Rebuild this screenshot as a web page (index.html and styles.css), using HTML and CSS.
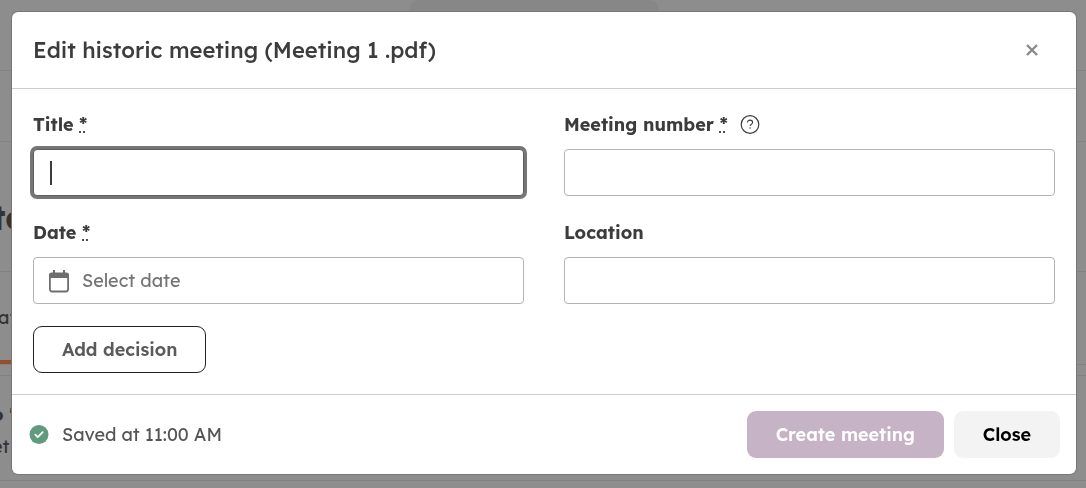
FILE: index.html
```html
<!DOCTYPE html>
<html lang="en">
<head>
  <meta charset="UTF-8" />
  <meta name="viewport" content="width=device-width, initial-scale=1.0" />
  <title>Edit historic meeting</title>
  <link rel="stylesheet" href="styles.css">
</head>
<body>
  <!-- Page behind the dialog -->
  <div class="page" aria-hidden="true">
    <div class="page-search"><span class="search-box"></span></div>
    <div class="page-bar"></div>
    <div class="page-title">to</div>
    <div class="page-tabs"><span class="tab">af</span></div>
    <div class="page-gap"></div>
    <div class="page-card">
      <strong>o '</strong>
      <span>et</span>
    </div>
  </div>

  <div class="overlay">
    <form class="modal" role="dialog" aria-labelledby="modal-title">
      <header class="modal-header">
        <h1 id="modal-title">Edit historic meeting (Meeting 1 .pdf)</h1>
        <button type="button" class="close-icon" aria-label="Close">
          <svg width="12" height="12" viewBox="0 0 12 12"><path d="M1 1l10 10M11 1L1 11" stroke="#8a8a8a" stroke-width="2.4" fill="none" /></svg>
        </button>
      </header>

      <div class="modal-body">
        <div class="form-grid">
          <div class="field">
            <div class="label-row">
              <label for="title">Title <abbr title="required">*</abbr></label>
            </div>
            <div class="input-wrap">
              <input type="text" id="title" class="text-input active" />
              <span class="caret"></span>
            </div>
          </div>
          <div class="field">
            <div class="label-row">
              <label for="number">Meeting number <abbr title="required">*</abbr></label>
              <svg class="help-icon" width="20" height="20" viewBox="0 0 20 20" fill="none" stroke="#3c3c3c">
                <circle cx="10" cy="9.5" r="8.8" stroke-width="1.2" />
                <path d="M7.4 7.6C7.4 6.1 8.5 5.1 10 5.1s2.6 1 2.6 2.3c0 1.7-2.5 1.9-2.5 3.7" stroke-width="1.1" />
                <circle cx="10.1" cy="13" r=".4" stroke-width=".8" />
              </svg>
            </div>
            <input type="text" id="number" class="text-input" />
          </div>
          <div class="field">
            <div class="label-row">
              <label for="date">Date <abbr title="required">*</abbr></label>
            </div>
            <div class="date-input">
              <svg width="22" height="24" viewBox="0 0 22 24">
                <path d="M6 1v5M16 1v5" stroke="#6e6e6e" stroke-width="2" />
                <rect x="1.9" y="5" width="18.2" height="17.5" rx="2.2" fill="none" stroke="#6e6e6e" stroke-width="1.8" />
                <path d="M1 9V6q0-2.500 2.500-2.500h15q2.500 0 2.500 2.500V9z" fill="#6e6e6e" />
              </svg>
              <input type="text" id="date" placeholder="Select date" />
            </div>
          </div>
          <div class="field">
            <div class="label-row">
              <label for="location">Location</label>
            </div>
            <input type="text" id="location" class="text-input" />
          </div>
        </div>
        <button type="button" class="btn btn-outline">Add decision</button>
      </div>

      <footer class="modal-footer">
        <div class="save-status">
          <svg width="20" height="20" viewBox="0 0 20 20">
            <circle cx="10" cy="9.500" r="9.500" fill="#619b7e" />
            <path d="M6.300 9.700l2.500 2.400L13.700 7.200" fill="none" stroke="#fff" stroke-width="1.800" stroke-linecap="round" stroke-linejoin="round" />
          </svg>
          <span>Saved at 11:00 AM</span>
        </div>
        <button type="submit" class="btn btn-primary" disabled>Create meeting</button>
        <button type="button" class="btn btn-light">Close</button>
      </footer>
    </form>
  </div>
</body>
</html>
```

FILE: styles.css
```css
* {
  box-sizing: border-box;
}

body {
  margin: 0;
  font-family: Lexend, Inter, "Open Sans", sans-serif;
  font-size: 18px;
  line-height: 24px;
  color: #3c3c3c;
  background-color: #8d8d8d;
}

input,
button {
  font-family: inherit;
  font-size: inherit;
  color: inherit;
}

/* Page behind the dialog */
.page {
  height: 100vh;
  overflow: hidden;
  color: #333;
}

.page > div {
  border-bottom: 1px solid #828282;
}

.page-search {
  height: 71px;
  display: flex;
  justify-content: center;
}

.search-box {
  width: 248px;
  height: 40px;
  margin-right: 18px;
  border-radius: 8px;
  background-color: #878787;
}

.page-bar {
  height: 71px;
}

.page-title {
  height: 130px;
  padding-top: 64px;
  font-size: 34px;
  font-weight: 700;
  text-indent: -8px;
}

.page-tabs {
  height: 93px;
}

.tab {
  display: block;
  width: 50%;
  height: 92px;
  padding-top: 34px;
  border-bottom: 4px solid #93502b;
  text-indent: -2px;
}

.page-gap {
  height: 11px;
}

.page-card {
  height: 105px;
  padding-top: 27px;
  display: flex;
  flex-direction: column;
  gap: 8px;
  text-indent: -8px;
}

/* Dialog */
.overlay {
  position: fixed;
  inset: 0;
  display: flex;
  align-items: flex-start;
  padding: 12px 10px 12px 12px;
}

.modal {
  flex: 1;
  background-color: #fff;
  border-radius: 6px;
  box-shadow: 0 0 0 1px #777;
}

.modal-header {
  display: flex;
  align-items: center;
  justify-content: space-between;
  padding: 24px 32px 23px 21px;
  border-bottom: 1px solid #ccc;
}

.modal-header h1 {
  margin: 0;
  font-size: 22px;
  line-height: 29px;
  font-weight: 500;
}

.close-icon {
  display: flex;
  padding: 6px 6px 8px;
  border: none;
  background: none;
  cursor: pointer;
}

.modal-body {
  padding: 24px 21px 21px;
}

.form-grid {
  display: grid;
  grid-template-columns: 1fr 1fr;
  gap: 25px 40px;
  margin-bottom: 22px;
}

.label-row {
  display: flex;
  align-items: center;
  gap: 12px;
  margin-bottom: 12px;
}

label {
  font-weight: 700;
}

abbr {
  text-decoration: underline dotted;
}

.text-input,
.date-input {
  display: block;
  width: 100%;
  height: 47px;
  padding: 0 16px;
  border: 1px solid #b3b3b3;
  border-radius: 4px;
  background-color: #fff;
  outline: none;
}

.text-input.active {
  border-color: #5e5e5e;
  box-shadow: 0 0 0 3px #767676;
}

.input-wrap {
  position: relative;
}

.caret {
  position: absolute;
  top: 12px;
  left: 17px;
  width: 2px;
  height: 24px;
  background-color: #3c3c3c;
}

.date-input {
  display: flex;
  align-items: center;
  gap: 12px;
  padding: 0 14px;
}

.date-input input {
  flex: 1;
  min-width: 0;
  padding: 0;
  border: none;
  outline: none;
}

.date-input input::placeholder {
  color: #757575;
}

.btn {
  height: 47px;
  padding: 0 28px;
  border: 1px solid transparent;
  border-radius: 9px;
  font-weight: 600;
  cursor: pointer;
}

.btn-outline {
  border-color: #222;
  background-color: #fff;
  color: #5a5a5a;
}

.btn-primary {
  background-color: #c6b3c6;
  color: #fff;
}

.btn-light {
  background-color: #f3f3f3;
  color: #000;
}

.modal-footer {
  display: flex;
  align-items: center;
  gap: 10px;
  padding: 16px 16px 16px 17px;
  border-top: 1px solid #ccc;
}

.save-status {
  flex: 1;
  display: flex;
  align-items: center;
  gap: 13px;
  color: #555;
}
```
